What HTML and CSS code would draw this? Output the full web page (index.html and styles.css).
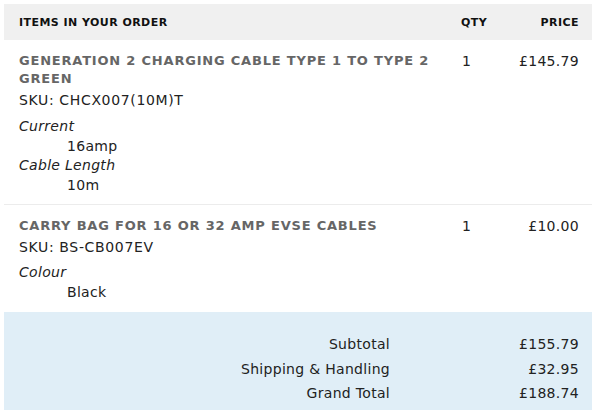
FILE: index.html
```html
<!DOCTYPE html>
<html>
<head>
<meta charset="utf-8">
<link rel="stylesheet" href="styles.css">
</head>
<body>
<table class="order">
  <thead>
    <tr class="head">
      <th class="c-item">Items in your order</th>
      <th class="c-qty">Qty</th>
      <th class="c-price">Price</th>
    </tr>
  </thead>
  <tbody>
    <tr class="item">
      <td class="c-item">
        <div class="name">Generation 2 Charging Cable Type 1 to Type 2 Green</div>
        <div class="sku">SKU: CHCX007(10M)T</div>
        <dl class="opts">
          <dt>Current</dt>
          <dd>16amp</dd>
          <dt>Cable Length</dt>
          <dd>10m</dd>
        </dl>
      </td>
      <td class="c-qty">1</td>
      <td class="c-price">£145.79</td>
    </tr>
    <tr class="item">
      <td class="c-item">
        <div class="name">Carry Bag for 16 or 32 amp EVSE Cables</div>
        <div class="sku">SKU: BS-CB007EV</div>
        <dl class="opts">
          <dt>Colour</dt>
          <dd>Black</dd>
        </dl>
      </td>
      <td class="c-qty">1</td>
      <td class="c-price">£10.00</td>
    </tr>
  </tbody>
  <tfoot>
    <tr class="tot first">
      <td class="t-label" colspan="2">Subtotal</td>
      <td class="t-val">£155.79</td>
    </tr>
    <tr class="tot">
      <td class="t-label" colspan="2">Shipping &amp; Handling</td>
      <td class="t-val">£32.95</td>
    </tr>
    <tr class="tot last">
      <td class="t-label" colspan="2">Grand Total</td>
      <td class="t-val">£188.74</td>
    </tr>
  </tfoot>
</table>
</body>
</html>
```
FILE: styles.css
```css
html, body {
  background: #fff;
}
body {
  margin: 4px 0 0 4px;
  font-family: Verdana, "DejaVu Sans", sans-serif;
  color: #222;
  font-size: 14px;
  letter-spacing: 0.3px;
}
.order {
  width: 588px;
  border-collapse: collapse;
}
.order th {
  background: #f0f0f0;
  font-size: 11px;
  font-weight: bold;
  letter-spacing: 0.45px;
  text-transform: uppercase;
  color: #111;
  height: 35px;
  padding: 1px 0 0 0;
  vertical-align: middle;
}
.order th.c-item { text-align: left; padding-left: 15px; }
.order th.c-qty { text-align: left; width: 40px; padding-left: 1px; }
.order th.c-price { text-align: right; padding-right: 13px; width: 78px; }

.item td {
  vertical-align: top;
  padding: 12px 0 8px 0;
  border-bottom: 1px solid #ececec;
  line-height: 20px;
}
.item + .item td { padding-top: 12px; padding-bottom: 10px; border-bottom: none; }
.item td.c-item { padding-left: 15px; }
.item td.c-qty { text-align: left; padding-left: 2px; line-height: 18px; }
.item td.c-price { text-align: right; padding-right: 13px; line-height: 18px; }

.name {
  font-weight: bold;
  color: #666;
  font-size: 13px;
  letter-spacing: 0.8px;
  text-transform: uppercase;
  line-height: 18px;
  padding-right: 20px;
}
.sku { margin-top: 2px; letter-spacing: 0.65px; }
.opts { margin: 7px 0 0 0; line-height: 19.7px; }
.item + .item .opts { margin-top: 6px; }
.opts dt { font-style: italic; }
.opts dd { margin-left: 48px; }

.tot td {
  background: #e0eef7;
  line-height: 24.5px;
  padding: 0;
}
.tot .t-label { text-align: right; padding-right: 111px; }
.tot .t-val { text-align: right; padding-right: 13px; }
.tot.first td { padding-top: 20px; }
.tot.last td { padding-bottom: 4px; }
```
